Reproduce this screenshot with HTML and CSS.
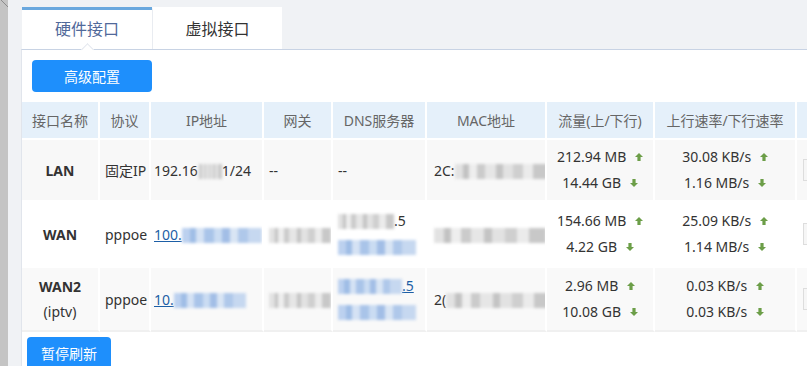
FILE: index.html
```html
<!DOCTYPE html>
<html lang="zh-CN">
<head>
  <meta charset="UTF-8">
  <title>接口状态</title>
  <link rel="stylesheet" href="styles.css">
</head>
<body>
<div class="page">
  <div class="edge">
    <svg width="8" height="10" viewBox="0 0 8 10"><path d="M1 0 L8 7" stroke="#8c8c8c" stroke-width="1"/></svg>
  </div>
  <div class="main">
    <div class="tabs">
      <div class="tab active">硬件接口</div>
      <div class="tab">虚拟接口</div>
    </div>

    <div class="card">
      <div class="toolbar">
        <button class="btn btn-wide">高级配置</button>
      </div>

      <table class="iface-table">
        <thead>
          <tr>
            <th class="c-name">接口名称</th>
            <th class="c-proto">协议</th>
            <th class="c-ip">IP地址</th>
            <th class="c-gw">网关</th>
            <th class="c-dns">DNS服务器</th>
            <th class="c-mac">MAC地址</th>
            <th class="c-flow">流量(上/下行)</th>
            <th class="c-rate">上行速率/下行速率</th>
            <th class="c-op"></th>
          </tr>
        </thead>
        <tbody>
          <tr class="row-lan">
            <td class="name"><b>LAN</b></td>
            <td>固定IP</td>
            <td class="ip">192.16<span class="mosaic gray w24"></span>1/24</td>
            <td>--</td>
            <td>--</td>
            <td class="mac">2C:<span class="mosaic gray w92"></span></td>
            <td class="center">
              <div class="line">212.94 MB <span class="arr up"><svg viewBox="0 0 8 8"><path d="M4 0 L8 4 H5.6 V8 H2.4 V4 H0 Z"/></svg></span></div>
              <div class="line">14.44 GB <span class="arr down"><svg viewBox="0 0 8 8"><path d="M4 8 L8 4 H5.6 V0 H2.4 V4 H0 Z"/></svg></span></div>
            </td>
            <td class="center">
              <div class="line">30.08 KB/s <span class="arr up"><svg viewBox="0 0 8 8"><path d="M4 0 L8 4 H5.6 V8 H2.4 V4 H0 Z"/></svg></span></div>
              <div class="line">1.16 MB/s <span class="arr down"><svg viewBox="0 0 8 8"><path d="M4 8 L8 4 H5.6 V0 H2.4 V4 H0 Z"/></svg></span></div>
            </td>
            <td><span class="op-box"></span></td>
          </tr>
          <tr class="row-wan">
            <td class="name"><b>WAN</b></td>
            <td>pppoe</td>
            <td class="ip"><a href="#">100.</a><span class="mosaic blue w80"></span></td>
            <td><span class="mosaic gray w62"></span></td>
            <td class="dns">
              <div class="line"><span class="mosaic gray w56"></span>.5</div>
              <div class="line"><a href="#"><span class="mosaic blue w78"></span></a></div>
            </td>
            <td class="mac"><span class="mosaic gray w112"></span></td>
            <td class="center">
              <div class="line">154.66 MB <span class="arr up"><svg viewBox="0 0 8 8"><path d="M4 0 L8 4 H5.6 V8 H2.4 V4 H0 Z"/></svg></span></div>
              <div class="line">4.22 GB <span class="arr down"><svg viewBox="0 0 8 8"><path d="M4 8 L8 4 H5.6 V0 H2.4 V4 H0 Z"/></svg></span></div>
            </td>
            <td class="center">
              <div class="line">25.09 KB/s <span class="arr up"><svg viewBox="0 0 8 8"><path d="M4 0 L8 4 H5.6 V8 H2.4 V4 H0 Z"/></svg></span></div>
              <div class="line">1.14 MB/s <span class="arr down"><svg viewBox="0 0 8 8"><path d="M4 8 L8 4 H5.6 V0 H2.4 V4 H0 Z"/></svg></span></div>
            </td>
            <td><span class="op-box"></span></td>
          </tr>
          <tr class="row-wan2">
            <td class="name"><b>WAN2</b><div class="sub">(iptv)</div></td>
            <td>pppoe</td>
            <td class="ip"><a href="#">10.</a><span class="mosaic blue w72"></span></td>
            <td><span class="mosaic gray w62"></span></td>
            <td class="dns">
              <div class="line"><a href="#"><span class="mosaic blue w64"></span>.5</a></div>
              <div class="line"><a href="#"><span class="mosaic blue w78"></span></a></div>
            </td>
            <td class="mac">2(<span class="mosaic gray w104"></span></td>
            <td class="center">
              <div class="line">2.96 MB <span class="arr up"><svg viewBox="0 0 8 8"><path d="M4 0 L8 4 H5.6 V8 H2.4 V4 H0 Z"/></svg></span></div>
              <div class="line">10.08 GB <span class="arr down"><svg viewBox="0 0 8 8"><path d="M4 8 L8 4 H5.6 V0 H2.4 V4 H0 Z"/></svg></span></div>
            </td>
            <td class="center">
              <div class="line">0.03 KB/s <span class="arr up"><svg viewBox="0 0 8 8"><path d="M4 0 L8 4 H5.6 V8 H2.4 V4 H0 Z"/></svg></span></div>
              <div class="line">0.03 KB/s <span class="arr down"><svg viewBox="0 0 8 8"><path d="M4 8 L8 4 H5.6 V0 H2.4 V4 H0 Z"/></svg></span></div>
            </td>
            <td><span class="op-box"></span></td>
          </tr>
        </tbody>
      </table>

      <div class="footer">
        <button class="btn">暂停刷新</button>
      </div>
    </div>
  </div>
</div>
</body>
</html>
```

FILE: styles.css
```css
html, body {
  margin: 0;
  height: 100%;
  overflow: hidden;
}
body {
  background: #f0f2f5;
  font-family: "Noto Sans", "Noto Sans CJK SC", sans-serif;
  font-size: 14px;
  color: #333;
}
.page {
  display: flex;
  height: 100%;
}
.edge {
  width: 8px;
  flex: none;
  background: #c4c4c4;
}
.edge svg {
  display: block;
}
.main {
  padding: 7px 0 0 13px;
  width: 960px;
  flex: none;
}

/* вкладки */
.tabs {
  display: flex;
  height: 42px;
}
.tab {
  position: relative;
  width: 130px;
  box-sizing: border-box;
  background: #fff;
  border-top: 3px solid #fff;
  font-size: 16px;
  line-height: 39px;
  text-align: center;
  color: #333;
}
.tab + .tab {
  border-left: 1px solid #e9ecf1;
}
.tab.active {
  border-top-color: #6aa8de;
  color: #51699a;
  margin-left: 1px;
}
.tab.active::after {
  content: "";
  position: absolute;
  left: 61px;
  bottom: -5px;
  width: 8px;
  height: 8px;
  background: #fff;
  border-top: 1px solid #e3e7ee;
  border-left: 1px solid #e3e7ee;
  transform: rotate(45deg);
}

.card {
  background: #fff;
  border-top: 1px solid #c8d3e4;
  border-left: 1px solid #e1e5ec;
  height: 400px;
}
.toolbar {
  padding: 10px 10px 10px;
}
.btn {
  height: 32px;
  padding: 0 14px;
  border: none;
  border-radius: 4px;
  background: #1e8ffc;
  color: #fff;
  font-family: inherit;
  font-size: 14px;
  cursor: pointer;
}
.btn-wide {
  width: 120px;
}

/* таблица интерфейсов */
.iface-table {
  border-collapse: separate;
  border-spacing: 0;
  table-layout: fixed;
  width: 877px;
}
.iface-table th,
.iface-table td {
  border-right: 2px solid #fff;
  border-bottom: 2px solid #fff;
  padding: 0 5px;
  white-space: nowrap;
  overflow: hidden;
}
.iface-table th {
  height: 36px;
  background: #e5f0fa;
  color: #666;
  font-weight: normal;
  text-align: center;
  padding: 0;
}
.c-name { width: 76px; }
.c-proto { width: 49px; }
.c-ip { width: 111px; }
.c-gw { width: 67px; }
.c-dns { width: 92px; }
.c-mac { width: 118px; }
.c-flow { width: 106px; }
.c-rate { width: 140px; }
.c-op { width: 100px; }

.row-lan td { height: 60px; background: #f8f8f8; }
.row-wan td { height: 64px; background: #fff; }
.row-wan2 td { height: 62px; background: #f9f9f9; border-bottom-color: #f0f0f0; }

.iface-table td.name {
  text-align: center;
  padding: 0;
}
.iface-table td.ip {
  padding-left: 3px;
}
.iface-table td.mac {
  padding-left: 7px;
}
.sub {
  margin-top: 6px;
}
.line {
  line-height: 26px;
}
.center {
  text-align: center;
}
a {
  color: #1d5fa6;
}

.arr {
  display: inline-block;
  margin-left: 5px;
  width: 8px;
  height: 8px;
  vertical-align: 1px;
}
.arr svg {
  display: block;
  width: 8px;
  height: 8px;
  fill: #6c9e48;
}

/* размытые данные */
.mosaic {
  display: inline-block;
  height: 15px;
  vertical-align: -3px;
  filter: blur(1.4px);
}
.mosaic.gray {
  background: linear-gradient(90deg, #e2e2e2 0 9%, #c2c2c2 9% 15%, #eeeeee 15% 24%, #cbcbcb 24% 33%, #e6e6e6 33% 45%, #c4c4c4 45% 52%, #e2e2e2 52% 63%, #cfcfcf 63% 74%, #ebebeb 74% 85%, #c8c8c8 85% 100%);
}
.mosaic.blue {
  background: linear-gradient(90deg, #bcd1ef 0 10%, #9fbde6 10% 18%, #d5e2f4 18% 28%, #a9c4e9 28% 40%, #cadcf2 40% 50%, #a2bee6 50% 60%, #d9e5f4 60% 70%, #afc8ea 70% 82%, #c6d8f0 82% 100%);
}
.w24 { width: 24px; }
.w56 { width: 56px; }
.w62 { width: 62px; }
.w64 { width: 64px; }
.w72 { width: 72px; }
.w78 { width: 78px; }
.w80 { width: 80px; }
.w92 { width: 92px; }
.w104 { width: 104px; }
.w112 { width: 112px; }

.op-box {
  display: inline-block;
  margin-left: 1px;
  width: 40px;
  height: 20px;
  border: 1px solid #ddd;
  background: #f6f6f6;
  vertical-align: middle;
}

.footer {
  padding: 5px 5px;
}
```
